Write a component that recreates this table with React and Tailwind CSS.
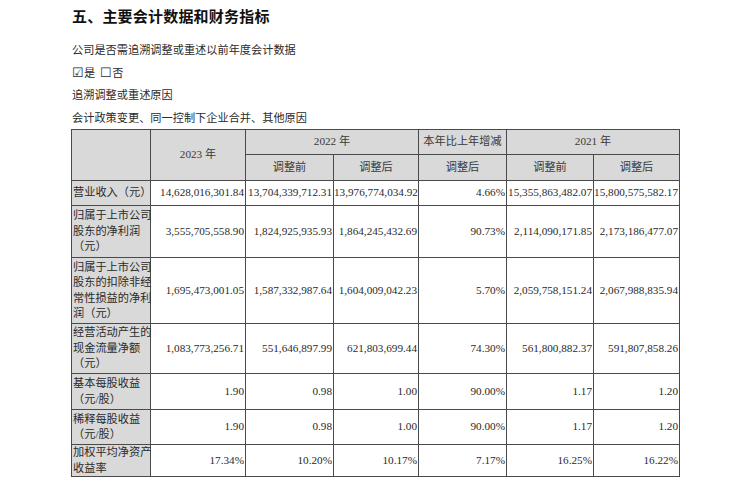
import React from 'react';

const rows = [
  { label: ['营业收入（元）'], h: 'h-[25px]', vals: ['14,628,016,301.84', '13,704,339,712.31', '13,976,774,034.92', '4.66%', '15,355,863,482.07', '15,800,575,582.17'] },
  { label: ['归属于上市公司', '股东的净利润', '（元）'], h: 'h-[52px]', vals: ['3,555,705,558.90', '1,824,925,935.93', '1,864,245,432.69', '90.73%', '2,114,090,171.85', '2,173,186,477.07'] },
  { label: ['归属于上市公司', '股东的扣除非经', '常性损益的净利', '润（元）'], h: 'h-[66px]', vals: ['1,695,473,001.05', '1,587,332,987.64', '1,604,009,042.23', '5.70%', '2,059,758,151.24', '2,067,988,835.94'] },
  { label: ['经营活动产生的', '现金流量净额', '（元）'], h: 'h-[50px]', vals: ['1,083,773,256.71', '551,646,897.99', '621,803,699.44', '74.30%', '561,800,882.37', '591,807,858.26'] },
  { label: ['基本每股收益', '（元/股）'], h: 'h-[36px]', vals: ['1.90', '0.98', '1.00', '90.00%', '1.17', '1.20'] },
  { label: ['稀释每股收益', '（元/股）'], h: 'h-[35px]', vals: ['1.90', '0.98', '1.00', '90.00%', '1.17', '1.20'] },
  { label: ['加权平均净资产', '收益率'], h: 'h-[27px]', vals: ['17.34%', '10.20%', '10.17%', '7.17%', '16.25%', '16.22%'] },
];

const cell = 'border border-[#4a4a4a] p-0';
const head = `${cell} bg-[#d9d9d9] text-center text-[#3a3a3a] font-normal`;

export default function App() {
  return (
    <div
      className="w-[750px] h-[481px] overflow-hidden bg-white pl-[71px] pt-[7px] text-[#2a2a2a]"
      style={{ fontFamily: '"Liberation Serif", "Noto Sans CJK SC", serif' }}
    >
      <h1 className="text-[15px] leading-[20px] font-bold text-[#111] pl-[1px] tracking-[0.2px]">
        五、主要会计数据和财务指标
      </h1>
      <div className="mt-[12px] text-[11.2px] leading-[22.5px] pl-[1px]">
        <p>公司是否需追溯调整或重述以前年度会计数据</p>
        <p className="flex items-center">
          <span className="text-[12.5px] leading-none">☑</span>
          <span>是</span>
          <span className="ml-[5px] text-[12.5px] leading-none">☐</span>
          <span>否</span>
        </p>
        <p>追溯调整或重述原因</p>
        <p>会计政策变更、同一控制下企业合并、其他原因</p>
      </div>
      <table className="border-collapse table-fixed w-[608px] text-[11.2px] leading-[15.5px]">
        <colgroup>
          <col className="w-[79px]" />
          <col className="w-[95px]" />
          <col className="w-[88px]" />
          <col className="w-[85px]" />
          <col className="w-[88px]" />
          <col className="w-[87px]" />
          <col className="w-[86px]" />
        </colgroup>
        <thead>
          <tr className="h-[25px]">
            <th rowSpan={2} className={head}></th>
            <th rowSpan={2} className={head}>2023 年</th>
            <th colSpan={2} className={head}>2022 年</th>
            <th className={head}>本年比上年增减</th>
            <th colSpan={2} className={head}>2021 年</th>
          </tr>
          <tr className="h-[26px]">
            <th className={head}>调整前</th>
            <th className={head}>调整后</th>
            <th className={head}>调整后</th>
            <th className={head}>调整前</th>
            <th className={head}>调整后</th>
          </tr>
        </thead>
        <tbody>
          {rows.map((r, i) => (
            <tr key={i} className={r.h}>
              <td className={`${cell} bg-[#d9d9d9] pl-[1px] text-left align-middle whitespace-nowrap`}>
                {r.label.map((l, j) => (
                  <div key={j}>{l}</div>
                ))}
              </td>
              {r.vals.map((v, j) => (
                <td key={j} className={`${cell} text-right align-middle whitespace-nowrap pr-[1px]`}>
                  {v}
                </td>
              ))}
            </tr>
          ))}
        </tbody>
      </table>
    </div>
  );
}
